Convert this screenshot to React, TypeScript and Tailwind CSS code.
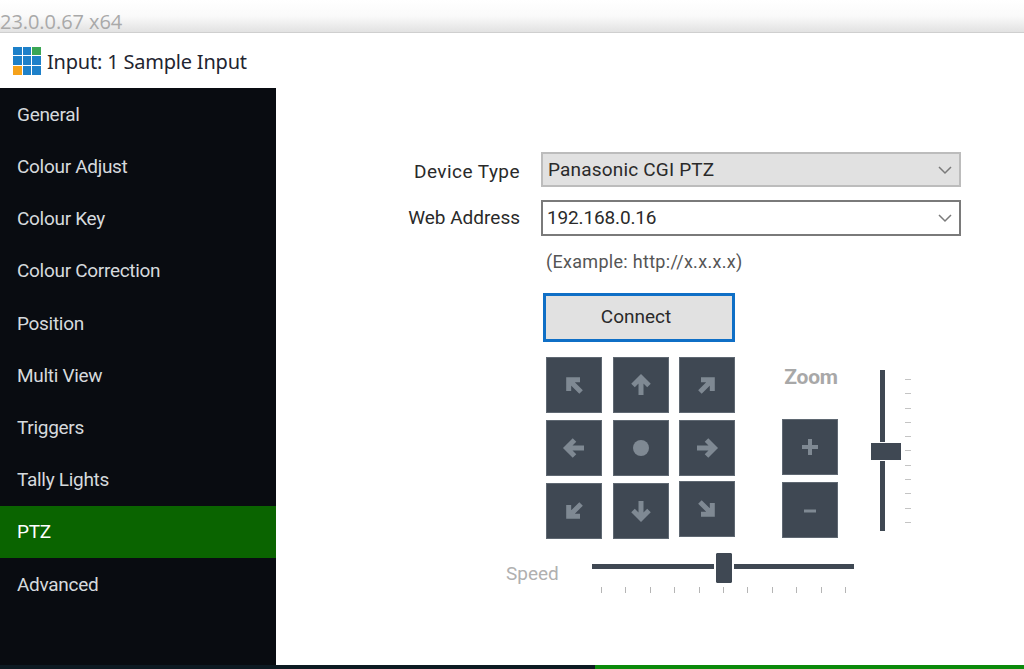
import React from "react";

const items = ["General","Colour Adjust","Colour Key","Colour Correction","Position","Multi View","Triggers","Tally Lights","PTZ","Advanced"];

function Arrow({ rot }: { rot: number }) {
  return (
    <svg width="28" height="28" viewBox="0 0 28 28" style={{ transform: `rotate(${rot}deg)` }}>
      <path d="M14 24V7M6 14.5L14 6.5l8 8" fill="none" stroke="#7f8993" strokeWidth="5" />
    </svg>
  );
}

function Cell({ children, className = "" }: { children?: React.ReactNode; className?: string }) {
  return <div className={`w-[56px] h-[56px] bg-[#3f4853] border border-[#5f6872] flex items-center justify-center ${className}`}>{children}</div>;
}

function Chevron() {
  return (
    <svg width="16" height="10" viewBox="0 0 16 10" className="shrink-0">
      <path d="M2 2l6 6 6-6" fill="none" stroke="#7a7a7a" strokeWidth="1.5" />
    </svg>
  );
}

export default function App() {
  const hTicks = Array.from({ length: 11 });
  return (
    <div className="w-[1024px] h-[669px] overflow-hidden bg-white flex flex-col font-['Roboto','Liberation_Sans',sans-serif] text-[#222]">
      <div className="h-[33px] shrink-0 bg-gradient-to-b from-white via-[#fafafa] to-[#e2e2e2] border-b border-[#cfcfcf] text-[20px] leading-[25px] pt-[10px] text-[#a9a9a9] font-['Open_Sans',sans-serif] tracking-[-0.05px]">
        <div className="-mt-[1px]">23.0.0.67 x64</div>
      </div>
      <div className="h-[55px] shrink-0 flex items-center pl-[13px] gap-[6px] text-[20px] font-['Noto_Sans',sans-serif] text-[#1f2530]">
        <div className="grid grid-cols-3 gap-[1px] w-[28px] h-[28px]">
          {["#1d80c9","#1d80c9","#3aa655","#1d80c9","#1d80c9","#1d80c9","#f5a21b","#1d80c9","#1d80c9"].map((c, i) => (
            <div key={i} style={{ background: c }} />
          ))}
        </div>
        <span className="tracking-[-0.2px] pt-[2px]">Input: 1 Sample Input</span>
      </div>
      <div className="flex-1 flex min-h-0">
        <div className="w-[276px] shrink-0 bg-[#090c11] flex flex-col text-[#d6dadd] text-[19px]">
          {items.map((t) => (
            <div key={t} className={`h-[52.2px] shrink-0 flex items-center pl-[17px] pt-[2px] tracking-[-0.3px] ${t === "PTZ" ? "bg-[#0a6400] text-white" : ""}`}>
              {t}
            </div>
          ))}
        </div>
        <div className="flex-1 pl-[132px] pt-[64px] flex flex-col text-[19px] text-[#2a2a2a]">
          <div className="flex items-center h-[35px]">
            <div className="w-[112px] text-right pt-[6px] whitespace-nowrap tracking-[0.45px]">Device Type</div>
            <div className="ml-[21px] w-[420px] h-[35px] bg-[#e1e1e1] border-2 border-[#bcbcbc] flex items-center justify-between pl-[5px] pr-[6px]">
              <span className="tracking-[0.18px] pt-[1px]">Panasonic CGI PTZ</span><Chevron />
            </div>
          </div>
          <div className="flex items-center h-[36px] mt-[13px]">
            <div className="w-[112px] text-right whitespace-nowrap">Web Address</div>
            <div className="ml-[21px] w-[420px] h-[36px] bg-white border-2 border-[#7a7a7a] flex items-center justify-between pl-[4px] pr-[6px]">
              <span className="tracking-[-0.15px]">192.168.0.16</span><Chevron />
            </div>
          </div>
          <div className="ml-[138px] mt-[14px] h-[24px] leading-[24px] text-[#555] text-[18px] tracking-[0.3px]">(Example: http://x.x.x.x)</div>
          <div className="ml-[135px] mt-[19px] w-[192px] h-[49px] bg-[#e1e1e1] border-[3px] border-[#0f6fc6] flex items-center justify-center pr-[6px]">Connect</div>
          <div className="ml-[138px] mt-[15px] flex">
            <div className="grid grid-cols-[56px_56px_56px] gap-x-[10.5px] gap-y-[7px]">
              <Cell><Arrow rot={-45} /></Cell>
              <Cell><Arrow rot={0} /></Cell>
              <Cell><Arrow rot={45} /></Cell>
              <Cell><Arrow rot={-90} /></Cell>
              <Cell><div className="w-[16px] h-[16px] rounded-full bg-[#7f8993]" /></Cell>
              <Cell><Arrow rot={90} /></Cell>
              <Cell><Arrow rot={-135} /></Cell>
              <Cell><Arrow rot={180} /></Cell>
              <Cell className="-mt-[2px]"><Arrow rot={135} /></Cell>
            </div>
            <div className="ml-[47px] w-[56px] flex flex-col items-center">
              <div className="h-[40px] text-[21px] font-bold text-[#a8a8a8] leading-[40px] tracking-[-0.2px] pl-[2px] whitespace-nowrap">Zoom</div>
              <div className="mt-[22px]"><Cell><svg width="24" height="24" viewBox="0 0 24 24"><path d="M12 4v16M4 12h16" stroke="#7f8993" strokeWidth="4" /></svg></Cell></div>
              <div className="mt-[7px]"><Cell><svg width="24" height="24" viewBox="0 0 24 24"><path d="M6 13h12" stroke="#7f8993" strokeWidth="3" /></svg></Cell></div>
            </div>
            <div className="ml-[33px] mt-[13px] relative w-[50px] h-[161px]">
              <div className="w-[5px] h-[161px] bg-[#3f4853] ml-[9px]" />
              <div className="absolute left-0 top-[73px] w-[30px] h-[17px] bg-[#3f4853] outline-1 outline-white" />
              <div className="absolute left-[34px] top-[9px] h-[144px] flex flex-col justify-between">
                {hTicks.map((_, i) => <div key={i} className="w-[6px] h-[1px] bg-[#c4c4c4]" />)}
              </div>
            </div>
          </div>
          <div className="flex mt-[14px] relative">
            <div className="w-[84px] ml-[98px] text-[#b0b0b0] pt-[7px] text-[19px]">Speed</div>
            <div className="relative ml-[2px] w-[262px] h-[40px]">
              <div className="absolute left-0 right-0 top-[11px] h-[5px] bg-[#3f4853]" />
              <div className="absolute left-[124px] top-0 w-[16px] h-[30px] bg-[#3f4853] rounded-[1px] outline-2 outline-white" />
              <div className="absolute left-[9px] right-[8px] top-[34px] flex justify-between">
                {hTicks.map((_, i) => <div key={i} className="w-[1px] h-[6px] bg-[#b5b5b5]" />)}
              </div>
            </div>
          </div>
        </div>
      </div>
      <div className="h-[4px] shrink-0 flex">
        <div className="w-[595px] bg-[#0d1a22]" />
        <div className="flex-1 bg-[#0b8a0b]" />
      </div>
    </div>
  );
}
